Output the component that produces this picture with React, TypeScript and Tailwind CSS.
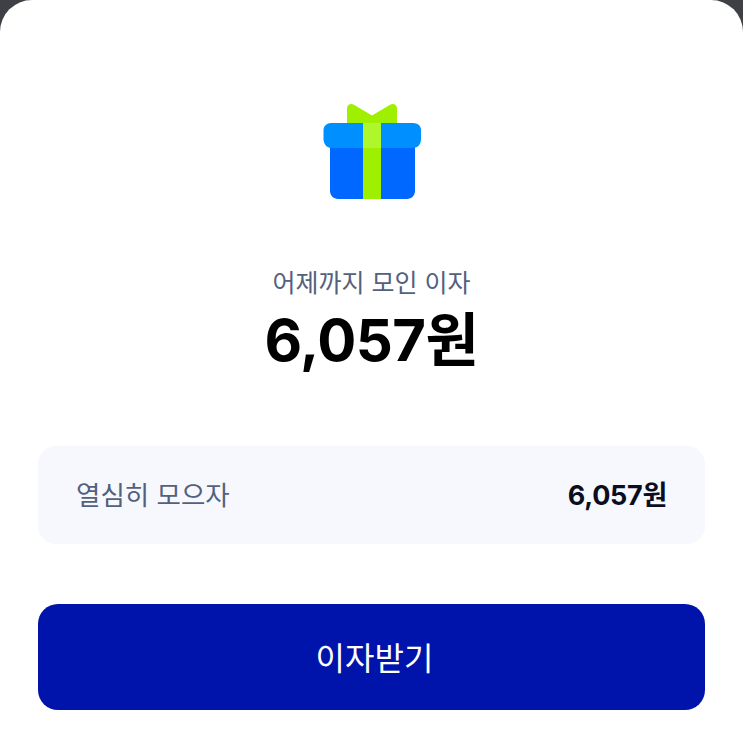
function GiftIcon() {
  return (
    <svg width="100" height="96" viewBox="0 0 100 96" fill="none" className="ml-[2px]">
      {/* bow */}
      <path
        d="M24 26V5.5C24 1.8 27.5 0 30.5 1.6L49 12.5L67.500 1.6C70.5 0 74 1.8 74 5.5V26Z"
        fill="#9FF000"
      />
      {/* box */}
      <path d="M7 40H92V88C92 92.4 88.4 96 84 96H15C10.6 96 7 92.4 7 88V40Z" fill="#0068FF" />
      {/* lid */}
      <path
        d="M8 20H90C95 20 98 23 98 27V36C98 41 95 45 90 45H8C4 45 0.500 41 0.500 36V27C0.500 23 4 20 8 20Z"
        fill="#008FFF"
      />
      <rect x="40" y="45" width="18" height="51" fill="#9FF000" />
      <rect x="40" y="20" width="18" height="25" fill="#AEF72C" />
    </svg>
  );
}

export default function App() {
  return (
    <div
      className="w-[743px] h-[743px] overflow-hidden bg-[#3f4045]"
      style={{ fontFamily: '"Inter", "Noto Sans CJK KR", sans-serif' }}
    >
      <div className="h-full bg-white rounded-t-[32px] px-[38px] pt-[103px] flex flex-col">
        <div className="flex justify-center">
          <GiftIcon />
        </div>

        <p className="mt-[66px] text-center text-[25px] leading-[36px] text-[#52617e]">
          어제까지 모인 이자
        </p>
        <p className="mt-[5px] text-center text-[58px] leading-[68px] font-bold text-black tracking-[-0.5px]">
          6,057원
        </p>

        {/* Summary row */}
        <div className="mt-[72px] h-[98px] rounded-[18px] bg-[#f7f8fd] pl-[38px] pr-[38px] pt-[2px] flex items-center justify-between">
          <span className="text-[26.5px] text-[#52617e]">열심히 모으자</span>
          <span className="text-[27px] font-bold text-[#0b0e1f] tracking-[-0.3px]">6,057원</span>
        </div>

        <button className="mt-[60px] h-[106px] rounded-[20px] bg-[#0014ac] text-white text-[32px] pl-[6px] pt-[4px] flex items-center justify-center">
          이자받기
        </button>
      </div>
    </div>
  );
}
